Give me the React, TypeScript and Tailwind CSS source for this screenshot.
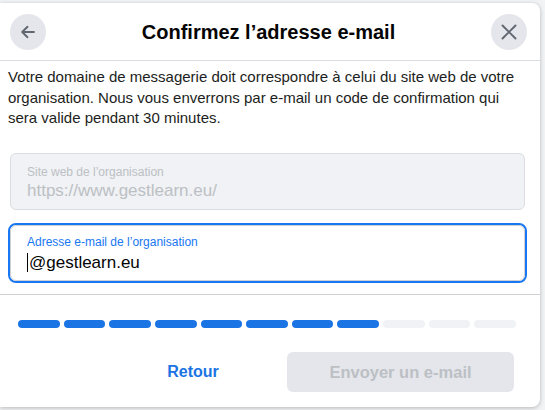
import React from "react";

const segments = Array.from({ length: 11 }, (_, i) => i < 8);

export default function App() {
  return (
    <div
      className="w-[545px] h-[410px] overflow-hidden bg-[#f2f3f5] pt-[3px]"
      style={{ fontFamily: '"Liberation Sans", Arial, sans-serif' }}
    >
      <div className="w-[540px] h-[404px] bg-white rounded-r-lg shadow-[0_1px_4px_rgba(0,0,0,0.25)] flex flex-col">
        {/* Header */}
        <div className="h-[58px] flex items-center pl-[10px] pr-[13px] border-b border-[#dadde1] shrink-0">
          <button className="w-9 h-9 rounded-full bg-[#e4e6eb] flex items-center justify-center shrink-0">
            <svg width="20" height="20" viewBox="0 0 20 20" fill="none">
              <path d="M16 10H4.5M9.5 4.8L4.2 10l5.3 5.2" stroke="#606770" strokeWidth="1.9" strokeLinecap="round" strokeLinejoin="round" />
            </svg>
          </button>
          <div className="flex-1 text-center text-[20px] font-bold text-[#050505] leading-6">
            Confirmez l’adresse e-mail
          </div>
          <button className="w-9 h-9 rounded-full bg-[#e4e6eb] flex items-center justify-center shrink-0">
            <svg width="20" height="20" viewBox="0 0 20 20" fill="none">
              <path d="M3.5 3.5l13 13M16.5 3.5l-13 13" stroke="#606770" strokeWidth="1.9" strokeLinecap="round" />
            </svg>
          </button>
        </div>

        {/* Body */}
        <div className="px-[8px] pt-[6px] h-[234px] border-b border-[#ced0d4] shrink-0">
          <p className="text-[15px] leading-[20.5px] text-[#1c1e21]">
            Votre domaine de messagerie doit correspondre à celui du site web de votre organisation. Nous vous enverrons par e-mail un code de confirmation qui sera valide pendant 30 minutes.
          </p>
          <div className="mt-[24px] ml-[2px] w-[515px] h-[57px] rounded-md bg-[#f0f2f5] border border-[#dadde1] pl-[16px] pt-[10px]">
            <div className="text-[12px] leading-4 text-[#bcc0c4]">Site web de l’organisation</div>
            <div className="text-[17px] leading-[22px] text-[#bcc0c4]">https://www.gestlearn.eu/</div>
          </div>
          <div className="mt-[13px] w-[519px] h-[60px] rounded-lg border-2 border-[#1877f2]">
            <div className="w-full h-full rounded-md border border-[#ced0d4] pl-[16px] pt-[8px]">
              <div className="text-[12px] leading-4 text-[#1877f2]">Adresse e-mail de l’organisation</div>
              <div className="mt-[2px] text-[17px] leading-[22px] text-[#050505] flex items-center">
                <span className="inline-block w-px h-[19px] bg-black mr-[1px]" />
                @gestlearn.eu
              </div>
            </div>
          </div>
        </div>

        {/* Progress */}
        <div className="pl-[18px] pt-[25px] flex gap-[4px] w-[516px]">
          {segments.map((on, i) => (
            <div
              key={i}
              className={on ? "flex-1 h-2 rounded-full bg-[#1b74e4]" : "flex-1 h-2 rounded-full bg-[#f0f2f5]"}
            />
          ))}
        </div>

        {/* Footer */}
        <div className="flex items-center justify-end pr-[26px] pt-[24px] gap-[38px]">
          <button className="w-[112px] h-[40px] text-[16px] font-bold text-[#1b74e4]">Retour</button>
          <button className="w-[227px] h-[40px] rounded-md bg-[#e4e6eb] text-[16.5px] font-bold text-[#bcc0c4]">
            Envoyer un e-mail
          </button>
        </div>
      </div>
    </div>
  );
}
